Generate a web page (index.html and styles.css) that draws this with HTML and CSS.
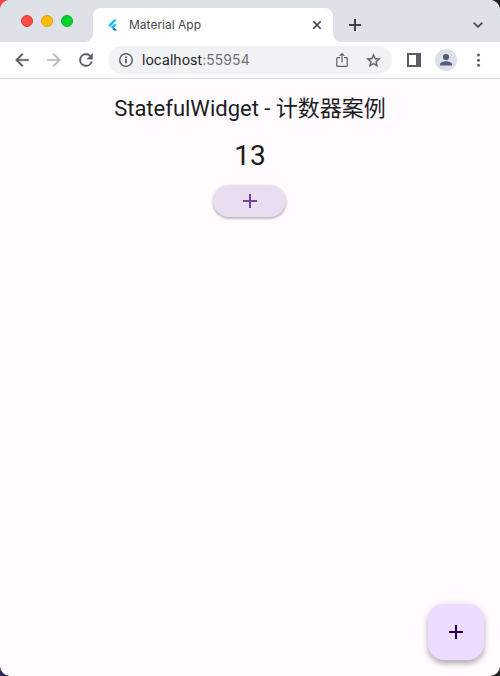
FILE: index.html
```html
<!DOCTYPE html>
<html lang="zh">
<head>
<meta charset="utf-8">
<title>Material App</title>
<link rel="stylesheet" href="styles.css">
</head>
<body>
<div class="window">
  <header class="tabs">
    <div class="lights"><i class="light red"></i><i class="light yellow"></i><i class="light green"></i></div>
    <div class="tab">
      <svg class="logo" width="12" height="12" viewBox="0 0 12 12"><path fill="#19bdfd" d="M6.900.5 1.300 6l2 2L9.900.5z"/><path fill="#19bdfd" d="M6.900 5.300 3.900 8.300l2 2 4-5z"/><path fill="#07499d" d="m5.900 10.300 1.300 1.200h2.900L7 8.700z"/></svg>
      <span class="tab-title">Material App</span>
      <svg class="close" width="10" height="10" viewBox="0 0 10 10"><path d="m1.300 1.300 7.400 7.400m0-7.400L1.300 8.700"/></svg>
    </div>
    <svg class="new-tab" width="12" height="12" viewBox="0 0 12 12"><path d="M6 0v12M0 6h12"/></svg>
    <svg class="chevron" width="10" height="6" viewBox="0 0 10 6"><path d="m.6.700 4.400 4.200L9.400.7"/></svg>
  </header>
  <nav class="toolbar">
    <svg class="nav-icon back" width="20" height="20" viewBox="0 0 24 24"><path d="M20 11H7.830l5.590-5.590L12 4l-8 8 8 8 1.410-1.410L7.830 13H20z"/></svg>
    <svg class="nav-icon forward" width="20" height="20" viewBox="0 0 24 24"><path d="m12 4-1.410 1.410L16.170 11H4v2h12.170l-5.580 5.590L12 20l8-8z"/></svg>
    <svg class="nav-icon reload" width="20" height="20" viewBox="0 0 24 24"><path d="M17.650 6.350A7.960 7.960 0 0 0 12 4a8 8 0 1 0 7.730 10h-2.080A6 6 0 1 1 12 6c1.660 0 3.140.69 4.220 1.780L13 11h7V4z"/></svg>
    <div class="address">
      <svg class="info" width="16" height="16" viewBox="0 0 16 16"><circle cx="8" cy="8" r="6.300"/><path d="M8 7v4.300M8 4.500V6"/></svg>
      <span class="url">localhost<span class="port">:55954</span></span>
      <svg class="share" width="12" height="16" viewBox="0 0 12 16"><path d="M4 5.600H1.500a.7.7 0 0 0-.7.700v7.400c0 .4.300.7.700.7h9c.4 0 .7-.3.700-.7V6.300a.7.700 0 0 0-.7-.7H8M6 10.500V1.700M3.600 3.900 6 1.500l2.400 2.400"/></svg>
      <svg class="star" width="17" height="17" viewBox="0 0 24 24"><path d="m22 9.240-7.190-.62L12 2 9.190 8.630 2 9.240l5.460 4.730L5.820 21 12 17.270 18.180 21l-1.630-7.030zM12 15.400l-3.760 2.270 1-4.280-3.320-2.880 4.380-.38L12 6.100l1.710 4.040 4.380.38-3.320 2.880 1 4.280z"/></svg>
    </div>
    <svg class="panel" width="14" height="14" viewBox="0 0 14 14"><path fill-rule="evenodd" d="M0 0h14v14H0zM2 2v10h7V2z"/></svg>
    <div class="avatar"><svg width="22" height="22" viewBox="0 0 22 22"><circle cx="11" cy="8" r="3.100"/><path d="M5 16.500v-1.200c0-2.100 4-3.100 6-3.100s6 1 6 3.100v1.200z"/></svg></div>
    <svg class="menu" width="4" height="14" viewBox="0 0 4 14"><circle cx="1.500" cy="2" r="1.500"/><circle cx="1.500" cy="7.300" r="1.500"/><circle cx="1.500" cy="12.300" r="1.500"/></svg>
  </nav>
  <main class="page">
    <h1 class="heading">StatefulWidget - 计数器案例</h1>
    <div class="count">13</div>
    <button class="add" aria-label="+"><svg width="14" height="14" viewBox="0 0 14 14"><path d="M7 0v14M0 7h14"/></svg></button>
    <button class="fab" aria-label="+"><svg width="14" height="14" viewBox="0 0 14 14"><path d="M7 0v14M0 7h14"/></svg></button>
  </main>
</div>
</body>
</html>
```
FILE: styles.css
```css
* { box-sizing: border-box; }
body {
  margin: 0;
  height: 676px;
  overflow: hidden;
  background: conic-gradient(from 0deg at 50% 50%, #20201f 0 50%, #29265b 50% 75%, #f34942 75%);
  font-family: Roboto, "Noto Sans CJK SC", sans-serif;
}
.window {
  width: 500px;
  height: 676px;
  display: flex;
  flex-direction: column;
  border-radius: 10px;
  overflow: hidden;
  background: #fffbff;
}
svg { display: block; flex: none; }
.tabs {
  height: 42px;
  flex: none;
  display: flex;
  align-items: center;
  padding: 8px 17px 0 21px;
  background: #dee1e8;
}
.lights { display: flex; gap: 8px; margin-top: -8px; }
.light { width: 12px; height: 12px; border-radius: 50%; border: 1px solid; }
.red { background: #ff4b43; border-color: #e4372f; }
.yellow { background: #ffbd00; border-color: #e2a100; }
.green { background: #00d42b; border-color: #00b622; }
.tab {
  position: relative;
  width: 240px;
  height: 34px;
  margin-left: 20px;
  padding: 0 11px 0 14px;
  display: flex;
  align-items: center;
  border-radius: 8px 8px 0 0;
  background: #fff;
}
.tab::before, .tab::after {
  content: "";
  position: absolute;
  bottom: 0;
  width: 8px;
  height: 8px;
}
.tab::before { left: -8px; background: radial-gradient(circle at 0 0, transparent 7.5px, #fff 8px); }
.tab::after { right: -8px; background: radial-gradient(circle at 100% 0, transparent 7.5px, #fff 8px); }
.tab-title {
  margin-left: 10px;
  flex: 1;
  font: 12px/16px Inter, sans-serif;
  color: #45474b;
}
.close, .new-tab, .chevron { fill: none; stroke: #3e4146; stroke-width: 1.600; }
.new-tab { margin-left: 16px; stroke-width: 2; }
.chevron { margin-left: auto; }
.toolbar {
  height: 37px;
  flex: none;
  display: flex;
  align-items: center;
  padding: 0 19px 0 12px;
  background: #fff;
  border-bottom: 1px solid #d9dadd;
}
.nav-icon { fill: #5b5e66; stroke: #5b5e66; stroke-width: .4; }
.forward { margin-left: 12px; fill: #b9babd; stroke: #b9babd; }
.reload { margin-left: 12px; }
.address {
  width: 284px;
  height: 28px;
  margin-left: 12px;
  padding: 0 10px;
  display: flex;
  align-items: center;
  border-radius: 14px;
  background: #f1f2f4;
}
.info, .share { fill: none; stroke: #5e6066; stroke-width: 1.500; }
.info path { stroke-width: 1.800; }
.share { stroke-width: 1.200; }
.url { margin-left: 8px; flex: 1; font: 14px/20px Inter, sans-serif; letter-spacing: .04px; color: #202124; }
.port { color: #717274; }
.star { margin-left: 17px; fill: #5e6066; stroke: #5e6066; stroke-width: .4; }
.panel { margin-left: 15px; fill: #5b5e66; }
.avatar { margin-left: 14px; width: 22px; height: 22px; border-radius: 50%; background: #dce0e9; fill: #4f5d78; }
.menu { margin-left: auto; fill: #5b5e66; }
.page {
  position: relative;
  flex: 1;
  display: flex;
  flex-direction: column;
  align-items: center;
  color: #1d1b1e;
}
.heading { margin: 14px 0 0; font-size: 22px; line-height: 32px; font-weight: 400; white-space: nowrap; }
.count { margin-top: 14px; font-size: 28px; line-height: 34px; }
button { padding: 0; border: 0; display: flex; align-items: center; justify-content: center; fill: none; stroke-width: 2; }
.add {
  margin: 12px 1px 0 0;
  padding-left: 1px;
  width: 73px;
  height: 32px;
  border-radius: 16px;
  background: #e9ddef;
  stroke: #6f43a5;
  box-shadow: 0 1px 3px rgba(0, 0, 0, .2), 0 2px 2px rgba(0, 0, 0, .15);
}
.fab {
  position: absolute;
  right: 16px;
  bottom: 16px;
  width: 56px;
  height: 56px;
  border-radius: 16px;
  background: #eddcff;
  stroke: #290055;
  box-shadow: 0 4px 5px rgba(0, 0, 0, .23), 0 1px 8px rgba(0, 0, 0, .12);
}
```
